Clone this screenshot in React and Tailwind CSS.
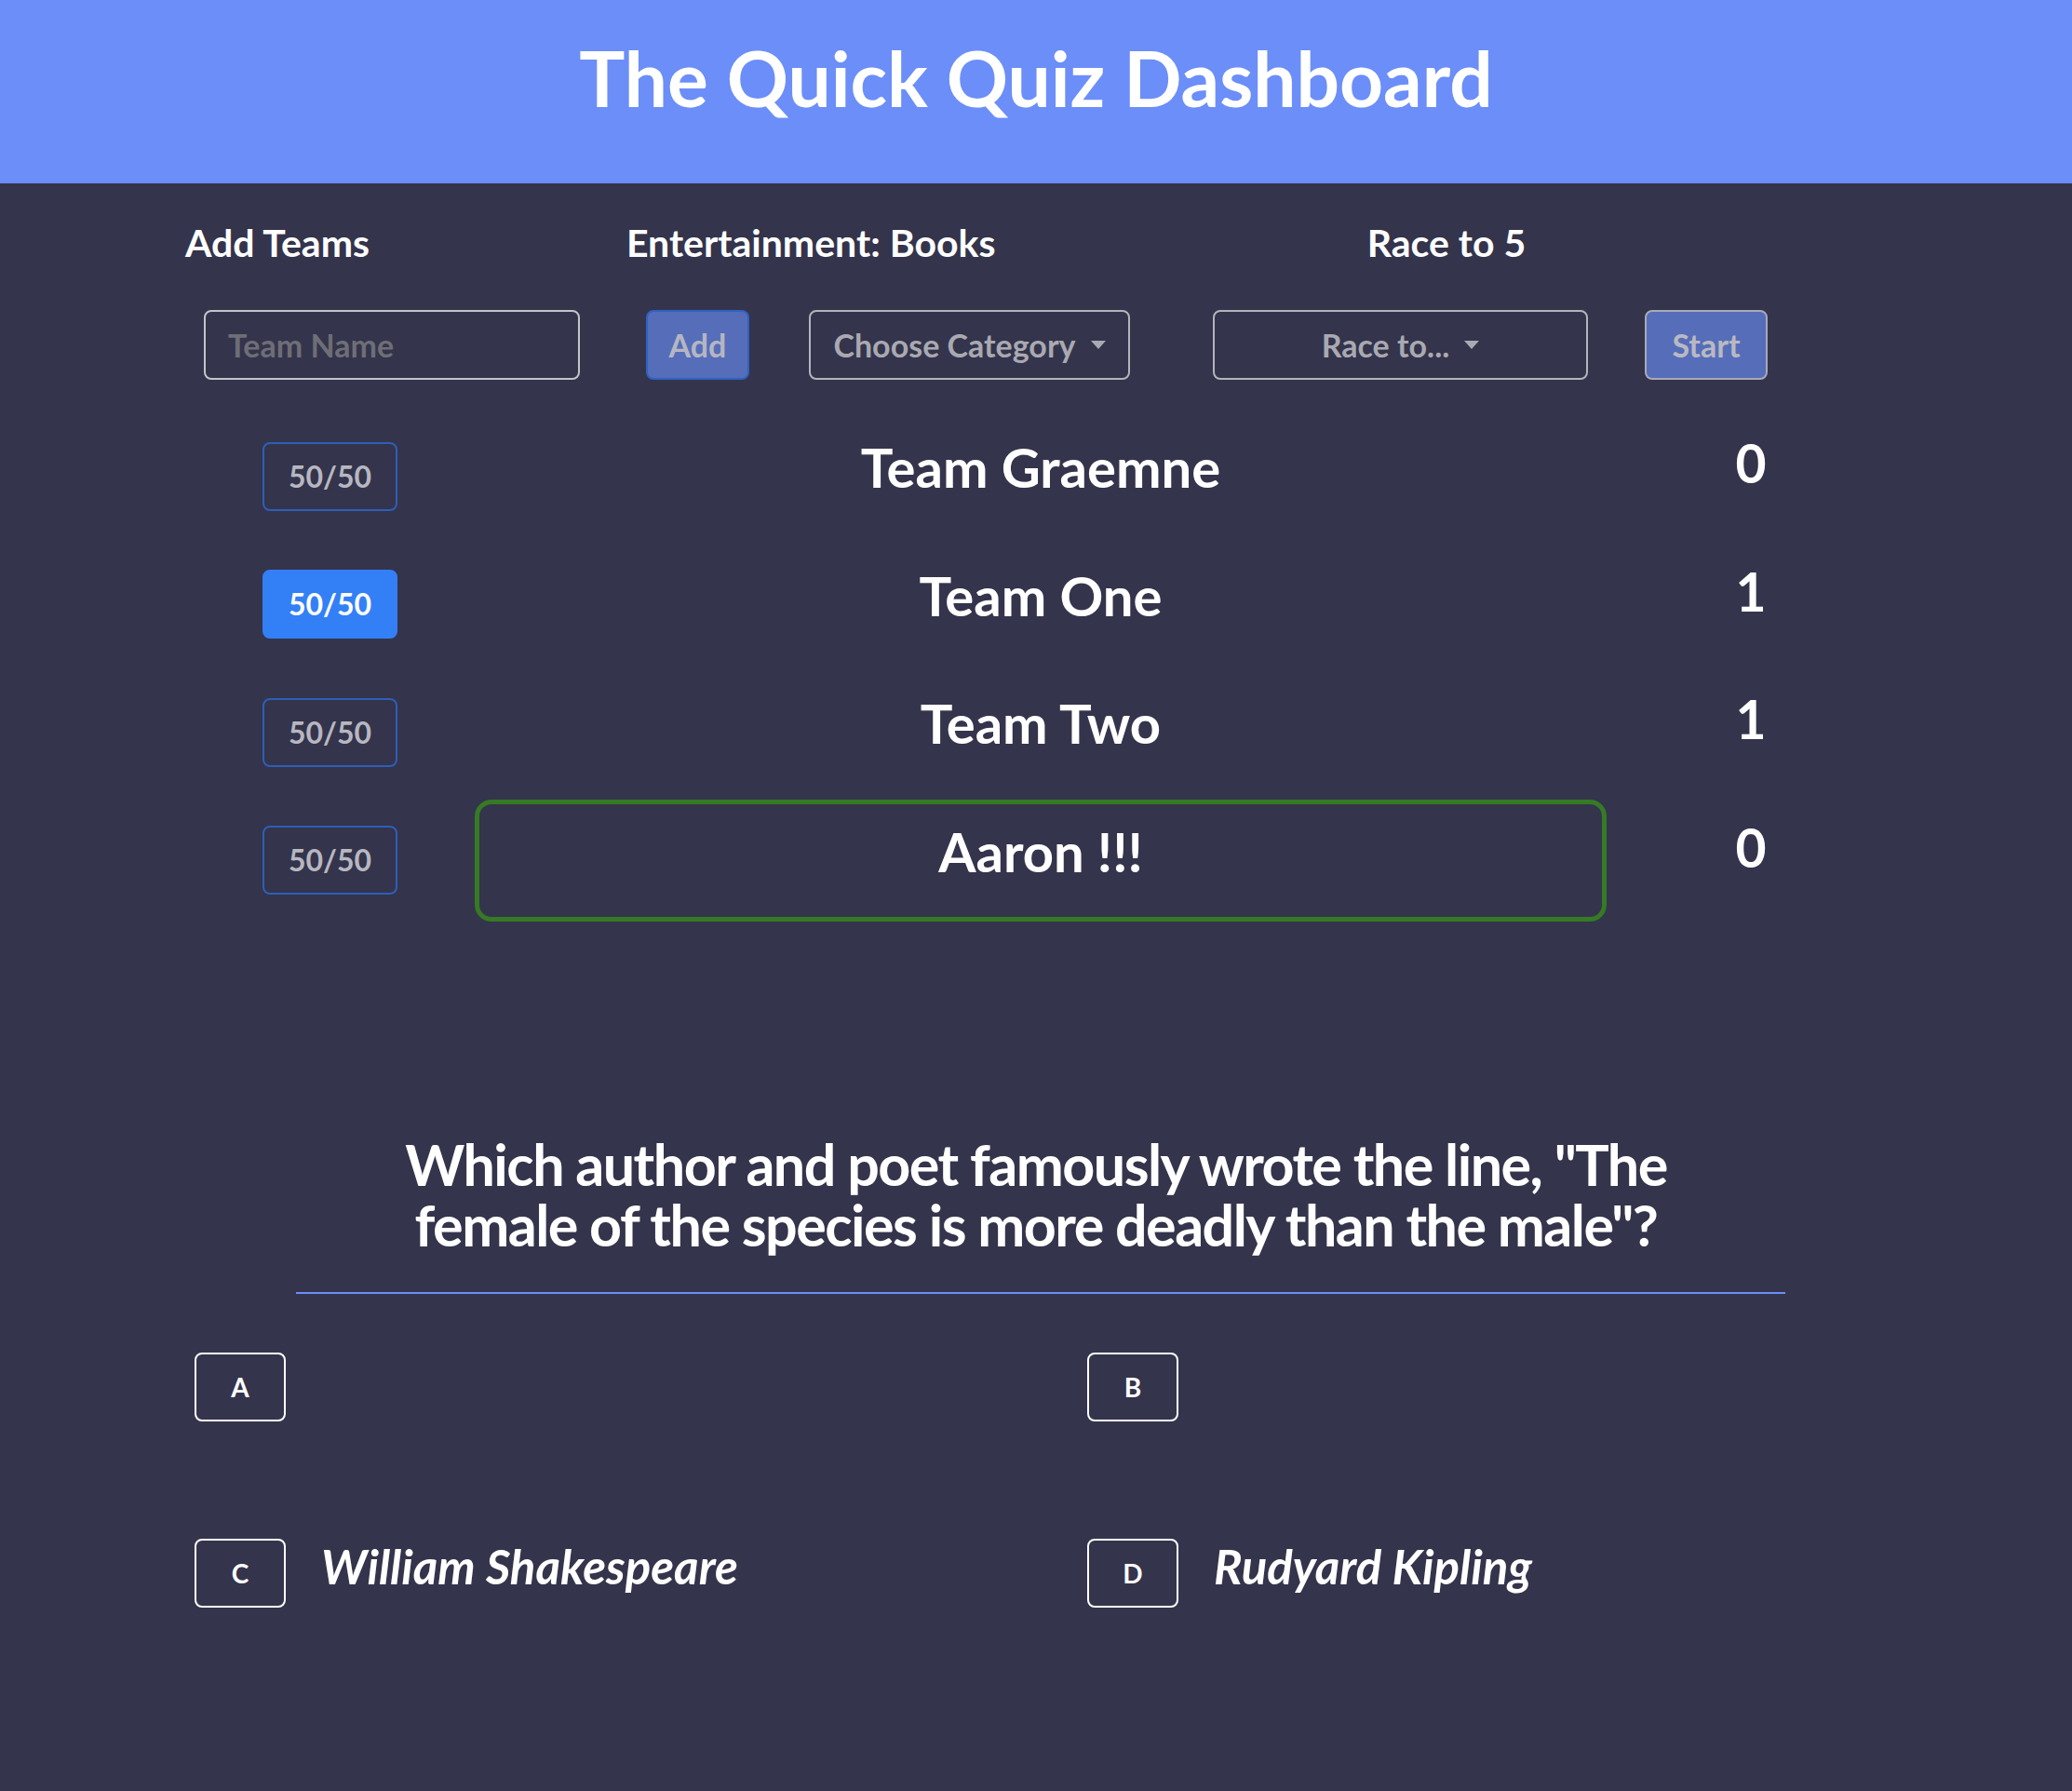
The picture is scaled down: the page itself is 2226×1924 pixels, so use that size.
import React from 'react';

const teams = [
  { name: 'Team Graemne', score: 0, active: false, turn: false },
  { name: 'Team One', score: 1, active: true, turn: false },
  { name: 'Team Two', score: 1, active: false, turn: false },
  { name: 'Aaron !!!', score: 0, active: false, turn: true },
];

const answers = [
  { letter: 'A', text: '' },
  { letter: 'B', text: '' },
  { letter: 'C', text: 'William Shakespeare' },
  { letter: 'D', text: 'Rudyard Kipling' },
];

const Caret = () => (
  <svg width="16" height="9" viewBox="0 0 16 9" className="shrink-0">
    <polygon points="0,0 16,0 8,9" fill="#a9a9b1" />
  </svg>
);

const App = () => {
  return (
    <div className="min-h-screen bg-[#34344c] font-['Lato','Liberation_Sans',sans-serif] text-white">
      {/* Header */}
      <div className="h-[197px] bg-[#6c8ef8] pt-[34px] text-center">
        <h1 className="text-[82px] leading-[1.2] font-bold">The Quick Quiz Dashboard</h1>
      </div>

      {/* Controls */}
      <div className="flex pt-[39px] pl-[199px] text-[41px] leading-[1.2] font-bold">
        <div className="w-[474px]">Add Teams</div>
        <div className="w-[600px]">Entertainment: Books</div>
        <div className="w-[562px] text-center">Race to 5</div>
      </div>

      <div className="flex mt-[48px] pl-[219px] h-[75px] text-[34px] font-bold">
        <input
          type="text"
          placeholder="Team Name"
          className="w-[404px] h-full rounded-[8px] border-2 border-[#c4c4ca] bg-transparent pl-[24px] outline-none placeholder:text-[#6e6e76]"
        />
        <button className="ml-[71px] w-[111px] h-full rounded-[8px] border-2 border-[#2f62c0] bg-[#566db9] text-[#b5b6c2]">
          Add
        </button>
        <button className="ml-[64px] w-[345px] h-full rounded-[8px] border-2 border-[#b4b4bb] flex items-center justify-center gap-[16px] text-[#a9a9b1]">
          <span>Choose Category</span>
          <Caret />
        </button>
        <button className="ml-[89px] w-[403px] h-full rounded-[8px] border-2 border-[#b4b4bb] flex items-center justify-center gap-[16px] text-[#a9a9b1]">
          <span>Race to...</span>
          <Caret />
        </button>
        <button className="ml-[61px] w-[132px] h-full rounded-[8px] border-2 border-[#a9a9b8] bg-[#566db9] text-[#b9b9c2]">
          Start
        </button>
      </div>

      {/* Teams */}
      <div className="mt-[38px] flex flex-col gap-[6.5px]">
        {teams.map((team, idx) => (
          <div key={idx} className="flex items-center h-[131px] pl-[282px]">
            <button
              className={`w-[145px] h-[74px] rounded-[8px] text-[32px] font-bold ${
                team.active
                  ? 'bg-[#3380f6] text-white border-2 border-[#3380f6]'
                  : 'border-2 border-[#2f5eb8] text-[#b7b7c0]'
              }`}
            >
              50/50
            </button>
            <div
              className={`ml-[83px] w-[1216px] h-full rounded-[18px] border-[5px] flex items-center justify-center ${
                team.turn ? 'border-[#357a24]' : 'border-transparent'
              }`}
            >
              <span className="text-[58px] leading-none font-bold mb-[19px]">{team.name}</span>
            </div>
            <div className="w-[310px] text-center text-[57px] leading-none font-bold mb-[28px]">{team.score}</div>
          </div>
        ))}
      </div>

      {/* Question */}
      <div className="mt-[228px] flex justify-center">
        <h2 className="w-[1420px] text-center text-[61px] leading-[65px] font-bold tracking-tight">
          Which author and poet famously wrote the line, "The female of the species is more deadly than the male"?
        </h2>
      </div>
      <div className="mt-[40px] ml-[318px] w-[1600px] h-[2px] bg-[#6b8ef7]" />

      {/* Answers */}
      <div className="mt-[63px] pl-[209px] grid grid-cols-[959px_959px] gap-y-[126px] pb-[199px]">
        {answers.map((a) => (
          <div key={a.letter} className="flex items-center gap-[38px] h-[74px]">
            <div className="w-[98px] h-[74px] shrink-0 rounded-[8px] border-2 border-white flex items-center justify-center text-[28px] font-bold">
              {a.letter}
            </div>
            <span className="text-[51px] italic font-bold mb-[12px]">{a.text}</span>
          </div>
        ))}
      </div>
    </div>
  );
};

export default App;
